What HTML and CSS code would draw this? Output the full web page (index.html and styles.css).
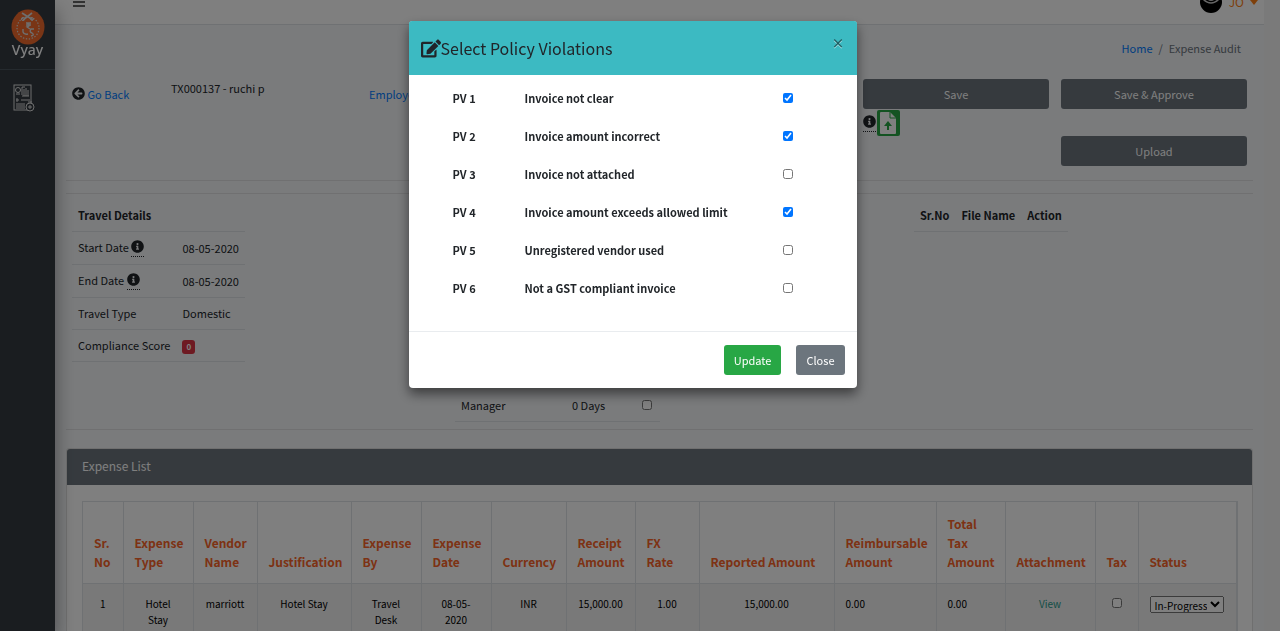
FILE: index.html
```html
<!DOCTYPE html>
<html lang="en">
<head>
    <meta charset="UTF-8">
    <title>Expense Audit</title>
    <link rel="stylesheet" href="styles.css">
</head>
<body>
    <svg class="sprite" aria-hidden="true">
        <symbol id="info" viewBox="0 0 512 512"><path fill="currentColor" d="M256 8C119 8 8 119 8 256s111 248 248 248 248-111 248-248S393 8 256 8zm0 110a42 42 0 1 1 0 84 42 42 0 0 1 0-84zm56 254c0 7-5 12-12 12h-88c-7 0-12-5-12-12v-24c0-7 5-12 12-12h12v-64h-12c-7 0-12-5-12-12v-24c0-7 5-12 12-12h64c7 0 12 5 12 12v100h12c7 0 12 5 12 12z"/></symbol>
        <symbol id="back" viewBox="0 0 512 512"><path fill="currentColor" d="M256 504C119 504 8 393 8 256S119 8 256 8s248 111 248 248-111 248-248 248zm29-143l-72-69h171c13 0 24-11 24-24v-24c0-13-11-24-24-24H213l72-69c10-10 10-25 1-35l-17-16c-9-9-24-9-34 0L103 239c-10 9-10 24 0 34l132 133c10 9 25 9 34 0l17-17c9-9 9-25-1-34z"/></symbol>
        <symbol id="edit" viewBox="0 0 576 512"><path fill="currentColor" d="M402 83l91 91c4 4 4 10 0 14L273 409l-94 10c-12 1-23-9-22-22l11-94L388 83c4-4 10-4 14 0zm162-23l-49-49c-15-15-40-15-55 0l-36 36c-4 4-4 10 0 14l91 91c4 4 10 4 14 0l36-36c15-16 15-41-1-56zM384 346v102H64V128h230c3 0 6-1 8-4l40-40c8-7 3-20-8-20H48C22 64 0 86 0 112v352c0 27 22 48 48 48h352c27 0 48-21 48-48V306c0-11-13-16-20-8l-40 40c-3 2-4 5-4 8z"/></symbol>
    </svg>

    <aside class="sidebar">
        <a href="#" class="brand" aria-label="Vyay home">
            <svg class="brand-logo" viewBox="0 0 34 36">
                <ellipse cx="17" cy="18" rx="16.5" ry="17.5" fill="#f26b2c"/>
                <circle cx="17" cy="19" r="11" fill="none" stroke="#ddd" stroke-width="1.2" stroke-dasharray="1.4 1.6"/>
                <path d="M11 4l11 7M21 4L12 11" stroke="#ddd" stroke-width="1.6" fill="none"/>
                <circle cx="12" cy="10" r="1.6" stroke="#ddd" fill="none"/>
                <circle cx="21" cy="10" r="1.4" stroke="#ddd" fill="none"/>
                <path d="M15 14h5M15 16h5M16 14q5 2 0 4l3 2M12 20v3q1 3 5 2M23 20h-3q-2 3 1 4 3 2-1 3" stroke="#ddd" stroke-width="1.4" fill="none"/>
            </svg>
            <span class="brand-text">Vyay</span>
        </a>
        <a href="#" class="side-link" aria-label="Expense audit">
            <svg viewBox="0 0 22 28" fill="none" stroke="#ddd" stroke-width="1">
                <rect x="1" y="1" width="17" height="25"/>
                <circle cx="5" cy="6" r="2.5"/>
                <path d="M9 3v8M11 5v7M13 4v8M15 6v6M9 3h3M3 10h4M9 12h7M4 14v4M3 16h3M8 16h9M3 20h9M3 22h9M3 24h9"/>
                <circle cx="17" cy="23" r="4" fill="#343a40"/>
                <path d="M15 18h4M17 21v4M15 23h4"/>
            </svg>
        </a>
    </aside>

    <div class="wrapper">
        <nav class="navbar">
            <button type="button" class="menu-btn" aria-label="Toggle menu">
                <svg viewBox="0 0 12 12" stroke="currentColor" stroke-width="1.5"><path d="M0 2h12M0 6h12M0 10h12"/></svg>
            </button>
            <a href="#" class="user">
                <svg viewBox="0 0 24 24"><circle cx="12" cy="12" r="11" fill="#000"/><circle cx="12" cy="7" r="4" fill="#ccc"/><path d="M4 9q8 8 16 0" fill="none" stroke="#ccc" stroke-width="1.5"/></svg>
                <span>JO</span>
                <svg class="caret" viewBox="0 0 8 5"><path d="M0 0h8L4 5z" fill="currentColor"/></svg>
            </a>
        </nav>

        <main class="content">
            <div class="breadcrumb"><a href="#">Home</a><span>/</span><span>Expense Audit</span></div>

            <div class="actions">
                <div class="go-back"><svg class="icon"><use href="#back"/></svg> <a href="#">Go Back</a></div>
                <div class="tx">TX000137 - ruchi p</div>
                <div class="employee"><a href="#">Employee</a></div>
                <div class="save-col">
                    <button type="button" class="btn gray">Save</button>
                    <div class="upload-line">
                        <abbr><svg class="icon"><use href="#info"/></svg></abbr>
                        <button type="button" class="file-btn" aria-label="Upload file">
                            <svg viewBox="0 0 16 22"><path d="M1 0h9l6 6v15q0 1-1 1H1q-1 0-1-1V1q0-1 1-1z" fill="#fff"/><path d="M10 0v6h6" fill="none" stroke="#28a745"/><path d="M8 18v-5" stroke="#28a745" stroke-width="2"/><path d="M8 9l-4 5h8z" fill="#28a745"/></svg>
                        </button>
                    </div>
                </div>
                <div class="approve-col">
                    <button type="button" class="btn gray">Save &amp; Approve</button>
                    <button type="button" class="btn gray">Upload</button>
                </div>
            </div>
            <hr>

            <div class="details">
                <table class="info-table travel">
                    <tr><th colspan="2">Travel Details</th></tr>
                    <tr class="dated"><td>Start Date <abbr><svg class="icon"><use href="#info"/></svg></abbr></td><td>08-05-2020</td></tr>
                    <tr class="dated"><td>End Date <abbr><svg class="icon"><use href="#info"/></svg></abbr></td><td>08-05-2020</td></tr>
                    <tr><td>Travel Type</td><td>Domestic</td></tr>
                    <tr><td>Compliance Score</td><td><span class="badge">0</span></td></tr>
                </table>
                <table class="info-table approval">
                    <tr><td>Manager</td><td>0 Days</td><td><input type="checkbox" aria-label="Manager"></td></tr>
                </table>
                <table class="info-table files">
                    <tr><th>Sr.No</th><th>File Name</th><th>Action</th></tr>
                </table>
            </div>

            <section class="card">
                <h2 class="card-header">Expense List</h2>
                <div class="card-body">
                    <div class="table-box">
                        <table class="expenses">
                            <colgroup>
                                <col class="w40"><col class="w70"><col class="w64"><col class="w94"><col class="w70"><col class="w70"><col class="w75"><col class="w69"><col class="w64"><col class="w135"><col class="w102"><col class="w69"><col class="w90"><col class="w43"><col class="w98">
                            </colgroup>
                            <thead>
                                <tr>
                                    <th>Sr. No</th>
                                    <th>Expense Type</th>
                                    <th>Vendor Name</th>
                                    <th>Justification</th>
                                    <th>Expense By</th>
                                    <th>Expense Date</th>
                                    <th>Currency</th>
                                    <th>Receipt Amount</th>
                                    <th>FX<br>Rate</th>
                                    <th>Reported Amount</th>
                                    <th>Reimbursable Amount</th>
                                    <th>Total<br>Tax<br>Amount</th>
                                    <th>Attachment</th>
                                    <th>Tax</th>
                                    <th>Status</th>
                                </tr>
                            </thead>
                            <tbody>
                                <tr>
                                    <td>1</td>
                                    <td>Hotel<br>Stay</td>
                                    <td>marriott</td>
                                    <td>Hotel Stay</td>
                                    <td>Travel<br>Desk</td>
                                    <td>08-05-<br>2020</td>
                                    <td>INR</td>
                                    <td>15,000.00</td>
                                    <td>1.00</td>
                                    <td>15,000.00</td>
                                    <td class="left">0.00</td>
                                    <td class="left">0.00</td>
                                    <td><a href="#">View</a></td>
                                    <td><input type="checkbox" aria-label="Tax"></td>
                                    <td class="left"><select aria-label="Status"><option>In-Progress</option></select></td>
                                </tr>
                            </tbody>
                        </table>
                    </div>
                </div>
            </section>
        </main>
    </div>

    <div class="backdrop">
        <div class="modal" role="dialog" aria-labelledby="modal-title">
            <div class="modal-header">
                <h4 id="modal-title"><svg class="edit"><use href="#edit"/></svg>Select Policy Violations</h4>
                <button type="button" class="close" aria-label="Dismiss">×</button>
            </div>
            <div class="modal-body">
                <table class="violations">
                    <tr><td>PV 1</td><td><label for="pv1">Invoice not clear</label></td><td><input type="checkbox" id="pv1" checked></td></tr>
                    <tr><td>PV 2</td><td><label for="pv2">Invoice amount incorrect</label></td><td><input type="checkbox" id="pv2" checked></td></tr>
                    <tr><td>PV 3</td><td><label for="pv3">Invoice not attached</label></td><td><input type="checkbox" id="pv3"></td></tr>
                    <tr><td>PV 4</td><td><label for="pv4">Invoice amount exceeds allowed limit</label></td><td><input type="checkbox" id="pv4" checked></td></tr>
                    <tr><td>PV 5</td><td><label for="pv5">Unregistered vendor used</label></td><td><input type="checkbox" id="pv5"></td></tr>
                    <tr><td>PV 6</td><td><label for="pv6">Not a GST compliant invoice</label></td><td><input type="checkbox" id="pv6"></td></tr>
                </table>
            </div>
            <div class="modal-footer">
                <button type="button" class="btn green">Update</button>
                <button type="button" class="btn gray">Close</button>
            </div>
        </div>
    </div>
</body>
</html>
```

FILE: styles.css
```css
* {
    box-sizing: border-box;
}

body {
    margin: 0;
    height: 100vh;
    overflow: hidden;
    font-family: "Noto Sans CJK SC", "Noto Sans", sans-serif;
    font-size: 11px;
    line-height: 18px;
    color: #212529;
    background: #f4f4f4;
}

a {
    color: #007bff;
    text-decoration: none;
}

button, select {
    font-family: inherit;
}

table {
    border-collapse: collapse;
}

input[type="checkbox"] {
    width: 10px;
    height: 10px;
    margin: 0;
}

hr {
    margin: 0;
    border: 0;
    border-top: 1px solid #e0e1e3;
}

.sprite {
    display: none;
}

.icon {
    width: 13px;
    height: 13px;
    vertical-align: -1px;
}

abbr {
    display: inline-block;
    height: 19px;
    border-bottom: 1px dotted #212529;
}

/* sidebar */
.sidebar {
    position: fixed;
    left: 0;
    top: 0;
    bottom: 0;
    width: 55px;
    background: #343a40;
    box-shadow: 0 10px 20px rgba(0, 0, 0, 0.4);
}

.brand {
    display: flex;
    flex-direction: column;
    align-items: center;
    height: 70px;
    padding-top: 9px;
    border-bottom: 1px solid #4b545c;
}

.brand-logo {
    width: 34px;
    height: 36px;
}

.brand-text {
    font-family: "Noto Sans", sans-serif;
    font-weight: 500;
    font-size: 14px;
    line-height: 10px;
    color: #fff;
}

.side-link {
    display: block;
    padding: 14px 13px;
}

.side-link svg {
    width: 22px;
    height: 28px;
}

/* page */
.wrapper {
    margin: -32px 16px 0 55px;
    background: #f4f6f9;
}

.navbar {
    display: flex;
    justify-content: space-between;
    align-items: center;
    height: 57px;
    padding: 12px 6px 0 18px;
    background: #fff;
    border-bottom: 1px solid #dee2e6;
}

.menu-btn {
    padding: 0;
    border: 0;
    background: none;
    color: #333;
}

.menu-btn svg {
    width: 12px;
    height: 12px;
}

.user {
    display: flex;
    align-items: center;
    gap: 6px;
    font-size: 12px;
    color: #fd7e14;
}

.user svg {
    width: 24px;
    height: 24px;
}

.user .caret {
    width: 8px;
    height: 5px;
}

.content {
    padding: 14px 11px;
}

.breadcrumb {
    display: flex;
    justify-content: flex-end;
    gap: 6px;
    padding-right: 12px;
    color: #6c757d;
}

.actions {
    display: grid;
    grid-template-columns: 87px 186px 1fr 186px 186px;
    column-gap: 12px;
    height: 101px;
    margin-top: 22px;
    padding: 0 6px;
}

.go-back, .employee {
    padding-top: 6px;
}

.btn {
    height: 30px;
    padding: 0 10px;
    border: 0;
    border-radius: 3px;
    font-size: 11px;
    line-height: 18px;
    color: #fff;
}

.gray {
    background: #6c757d;
}

.green {
    background: #28a745;
}

.save-col .btn, .approve-col .btn {
    display: block;
    width: 100%;
}

.approve-col {
    display: grid;
    gap: 27px;
    align-content: start;
}

.upload-line {
    display: flex;
    gap: 1px;
    padding-top: 1px;
}

.upload-line abbr {
    margin-top: 3px;
}

.file-btn {
    width: 23px;
    height: 26px;
    padding: 2px 3px;
    border: 0;
    border-radius: 2px;
    background: #28a745;
}

.file-btn svg {
    display: block;
    width: 16px;
    height: 22px;
}

.details {
    display: grid;
    grid-template-columns: 383px 459px 1fr;
    height: 237px;
    margin-top: 12px;
    padding: 5px 6px 7px;
    border-top: 1px solid #e0e1e3;
    border-bottom: 1px solid #e0e1e3;
}

.info-table {
    align-self: start;
    justify-self: start;
}

.info-table th, .info-table td {
    height: 32px;
    padding: 0 6px;
    border-bottom: 1px solid #dee2e6;
    text-align: left;
}

.info-table .dated td {
    height: 33px;
}

.travel {
    width: 170px;
    white-space: nowrap;
}

.approval {
    align-self: end;
    width: 205px;
}

.approval td:nth-child(1) {
    width: 111px;
}

.approval td:nth-child(2) {
    width: 70px;
}

.badge {
    display: inline-block;
    padding: 0 4px;
    border-radius: 3px;
    font-size: 8px;
    font-weight: bold;
    line-height: 14px;
    color: #fff;
    background: #dc3545;
}

/* expense list */
.card {
    margin-top: 18px;
    border: 1px solid #dfdfdf;
    border-radius: 3px;
    background: #fff;
}

.card-header {
    margin: 0;
    padding: 8px 15px 10px;
    border-radius: 3px 3px 0 0;
    font-size: 12px;
    font-weight: normal;
    line-height: 18px;
    color: #fff;
    background: #6c757d;
}

.card-body {
    padding: 16px 14px 16px 15px;
}

.table-box {
    padding-right: 2px;
    border: 1px solid #dee2e6;
}

.expenses {
    width: 100%;
    table-layout: fixed;
}

.expenses th {
    height: 81px;
    padding: 10px 6px 12px 11px;
    border-right: 1px solid #dee2e6;
    border-bottom: 1px solid #dee2e6;
    font-size: 12px;
    line-height: 19px;
    text-align: left;
    vertical-align: bottom;
    color: #fa6428;
}

.expenses td {
    height: 70px;
    padding: 12px 11px;
    border-right: 1px solid #dee2e6;
    font-size: 10px;
    line-height: 16px;
    text-align: center;
    vertical-align: top;
    color: #000;
    background: #f2f2f2;
}

.expenses td.left {
    text-align: left;
}

.expenses td a {
    color: #2a9d8f;
}

.expenses select {
    width: 74px;
    height: 17px;
    padding: 0;
    font-size: 10px;
    line-height: 14px;
}

.w40 { width: 40px; }
.w43 { width: 43px; }
.w64 { width: 64px; }
.w69 { width: 69px; }
.w70 { width: 70px; }
.w75 { width: 75px; }
.w90 { width: 90px; }
.w94 { width: 94px; }
.w98 { width: 98px; }
.w102 { width: 102px; }
.w135 { width: 135px; }

/* modal */
.backdrop {
    position: fixed;
    inset: 0;
    display: flex;
    justify-content: center;
    align-items: flex-start;
    padding: 21px 15px 0 0;
    background: rgba(0, 0, 0, 0.5);
}

.modal {
    width: 35%;
    min-width: 448px;
    border-radius: 4px;
    background: #fff;
    box-shadow: 0 6px 12px rgba(0, 0, 0, 0.5);
}

.modal-header {
    display: flex;
    justify-content: space-between;
    align-items: flex-start;
    padding: 12px;
    border-radius: 3px 3px 0 0;
    background: #3cbac2;
}

.modal-header h4 {
    display: flex;
    align-items: center;
    margin: 0;
    font-size: 16px;
    font-weight: normal;
    line-height: 30px;
}

.edit {
    width: 20px;
    height: 19px;
}

.close {
    padding: 0;
    border: 0;
    background: none;
    font-size: 13px;
    font-weight: bold;
    line-height: 20px;
    text-shadow: 0 1px 0 #fff;
    color: #000;
    opacity: 0.5;
}

.modal-body {
    padding: 4px 38px 24px;
}

.violations {
    width: 100%;
    font-weight: bold;
}

.violations td {
    height: 38px;
    padding: 0 6px;
}

.violations td:nth-child(1) {
    width: 72px;
}

.violations td:nth-child(3) {
    width: 42px;
}

.modal-footer {
    display: flex;
    justify-content: flex-end;
    gap: 15px;
    padding: 13px 12px;
    border-top: 1px solid #e9ecef;
}
```
